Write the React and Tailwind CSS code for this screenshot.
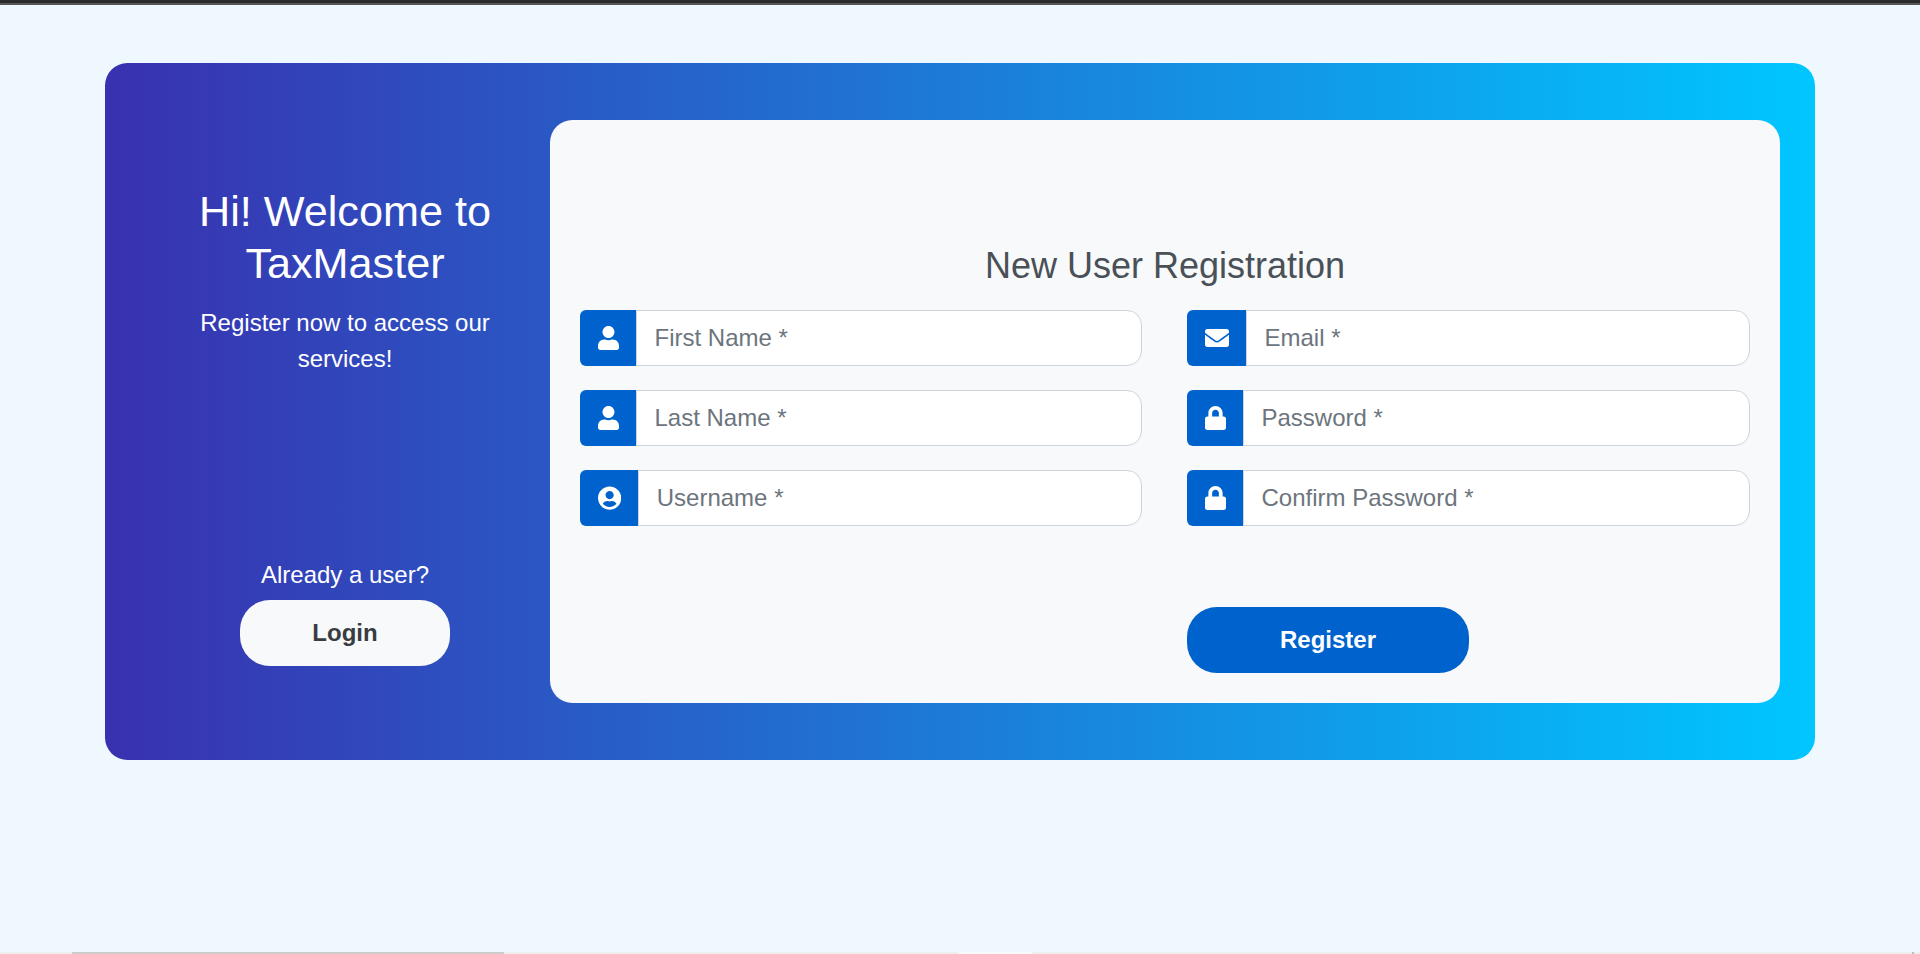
import { FaUser, FaUserCircle, FaEnvelope, FaLock } from "react-icons/fa";

function Field({ icon: Icon, iconClass, label, type = "text" }) {
  return (
    <div className="flex h-14">
      <span className="flex items-center rounded-l-md bg-[#0062cc] pl-[18px] pr-[17px] text-white">
        <Icon className={iconClass} preserveAspectRatio="none" />
      </span>
      <input
        type={type}
        placeholder={label}
        className="min-w-0 flex-1 rounded-r-[15px] border border-[#ced4da] bg-white px-[17.5px] text-2xl text-[#495057] outline-none placeholder:text-[#6c757d]"
      />
    </div>
  );
}

export default function App() {
  return (
    <div className="flex h-[954px] flex-col bg-[#f0f8ff] font-['Liberation_Sans',Arial,sans-serif] text-2xl/9">
      <div className="h-[5px] border-b-2 border-[#555555] bg-[#2b2b2b]" />
      <main className="flex-1 px-[105px] pt-[58px]">
        <section className="flex h-[697px] rounded-[22.5px] bg-linear-to-r/srgb from-[#3931af] to-[#00c6ff] px-[35px] py-[57px]">
          <aside className="flex w-[410px] flex-col items-center text-center text-white">
            <div className="flex w-[300px] flex-col items-center pt-[65px]">
              <h3 className="mb-4 text-[43.2px] leading-[52px] whitespace-nowrap">
                Hi! Welcome to
                <br />
                TaxMaster
              </h3>
              <p>Register now to access our services!</p>
            </div>
            <p className="mt-[180px] mb-[7px]">Already a user?</p>
            <button className="h-[66px] w-[210px] rounded-[30px] bg-[#f8f9fa] font-bold text-[#383d41]">
              Login
            </button>
          </aside>
          <form className="flex flex-1 flex-col rounded-[22.5px] bg-[#f8f9fa] px-[30px] pt-[124px]">
            <h3 className="mb-[23px] text-center text-4xl leading-[43px] text-[#495057]">New User Registration</h3>
            <div className="grid grid-cols-[562px_563px] gap-x-[45px]">
              <div className="flex flex-col gap-6">
                <Field icon={FaUser} iconClass="h-6 w-[21px]" label="First Name *" />
                <Field icon={FaUser} iconClass="h-6 w-[21px]" label="Last Name *" />
                <Field icon={FaUserCircle} iconClass="h-6 w-[23.25px]" label="Username *" />
              </div>
              <div className="flex flex-col gap-6">
                <Field icon={FaEnvelope} iconClass="size-6" label="Email *" type="email" />
                <Field icon={FaLock} iconClass="h-6 w-[21px]" label="Password *" type="password" />
                <Field icon={FaLock} iconClass="h-6 w-[21px]" label="Confirm Password *" type="password" />
                <button className="mt-[57px] h-[66px] w-[282px] rounded-[30px] bg-[#0062cc] font-bold text-white">
                  Register
                </button>
              </div>
            </div>
          </form>
        </section>
      </main>
      <div className="flex h-0.5 bg-[#eeeeee]">
        <div className="ml-[72px] w-[432px] bg-[#cdcaca]" />
        <div className="ml-[455px] w-[73px] bg-[#fafafa]" />
        <div className="ml-[880px] w-0.5 bg-[#bbbbbb]" />
      </div>
    </div>
  );
}
